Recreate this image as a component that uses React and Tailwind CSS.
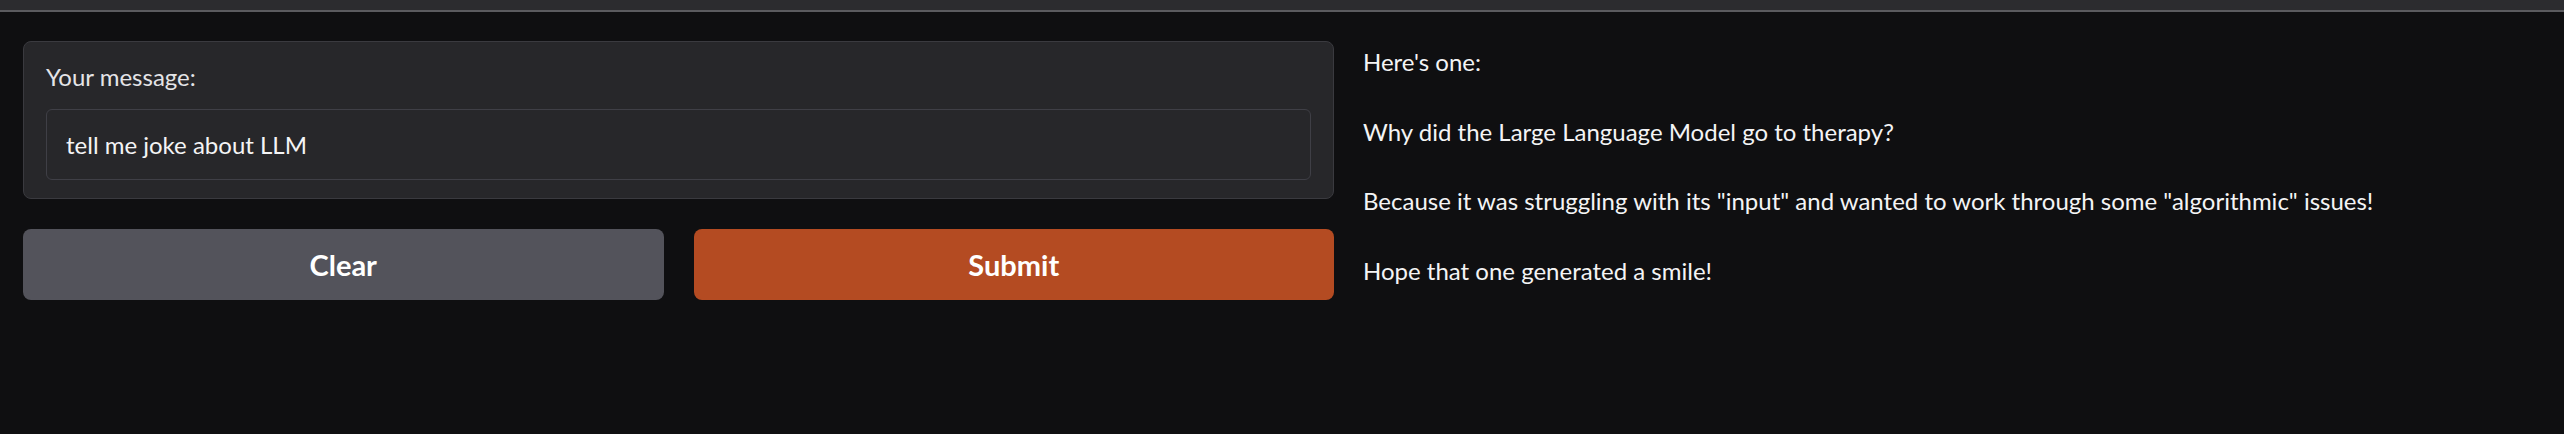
import React from 'react';

const App = () => {
  const lines = [
    "Here's one:",
    'Why did the Large Language Model go to therapy?',
    'Because it was struggling with its "input" and wanted to work through some "algorithmic" issues!',
    'Hope that one generated a smile!',
  ];

  return (
    <div
      className="min-h-screen w-full bg-[#0f0f11] text-[#f4f4f5]"
      style={{ fontFamily: 'Lato, "Open Sans", sans-serif' }}
    >
      <div className="h-[10px] bg-[#2c2c2f]" />
      <div className="h-[2px] bg-[#5b5b5f]" />

      <div className="flex gap-[29px] px-[23px] pt-[29px]">
        {/* left column */}
        <div className="flex w-[1311px] flex-col gap-[30px]">
          <div className="rounded-lg border border-[#3a3a3f] bg-[#27272a] px-[22px] pt-[19px] pb-[18px]">
            <label className="block text-[24px] leading-[32px] text-[#e4e4e7]">Your message:</label>
            <div className="mt-[16px] flex h-[71px] items-center rounded-md border border-[#3f3f46] bg-[#27272a] px-[19px] text-[24px] text-[#f4f4f5]">
              tell me joke about LLM
            </div>
          </div>

          <div className="grid grid-cols-2 gap-[30px]">
            <button className="h-[71px] rounded-lg bg-[#53535b] text-[29px] font-bold text-white">
              Clear
            </button>
            <button className="h-[71px] rounded-lg bg-[#b44b22] text-[29px] font-bold text-white">
              Submit
            </button>
          </div>
        </div>

        {/* right column */}
        <div className="flex flex-col gap-[34.5px] pt-[3px] text-[24px] leading-[35px]">
          {lines.map((l, i) => (
            <p key={i}>{l}</p>
          ))}
        </div>
      </div>
    </div>
  );
};

export default App;
